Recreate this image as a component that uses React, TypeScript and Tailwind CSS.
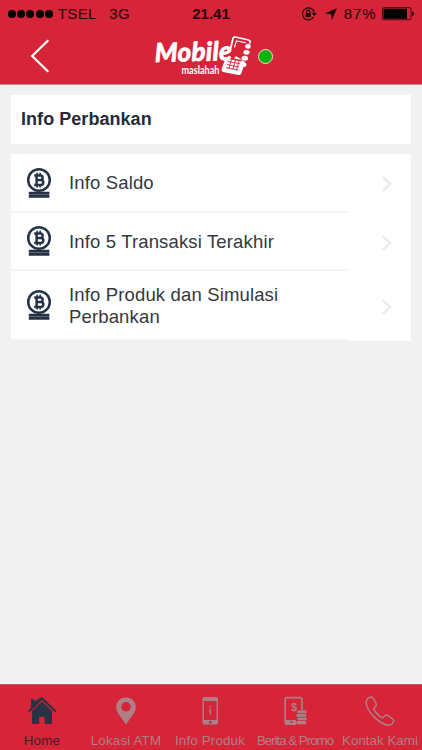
import type { ReactNode } from 'react';

interface MenuItem {
    id: string;
    label: string;
    rowClass: string;
}

interface TabItem {
    id: string;
    label: string;
    icon: ReactNode;
    width: string;
    textClass: string;
}

const menuItems: MenuItem[] = [
    { id: 'saldo', label: 'Info Saldo', rowClass: 'h-[59px]' },
    { id: 'transaksi', label: 'Info 5 Transaksi Terakhir', rowClass: 'h-[58px]' },
    { id: 'produk', label: 'Info Produk dan Simulasi Perbankan', rowClass: 'h-[70px]' },
];

function HomeIcon() {
    return (
        <svg width="30" height="30" viewBox="0 0 30 30" fill="currentColor" className="text-[#2a3344]">
            <path d="M4 8V3h3v2.500L15 1l14.500 14-1.400 1.400L15 4 2.200 16.400 1 15l3-3z" />
            <path d="M15 5.600 5 15v13h7.200v-7h5.400v7H25V15z" />
        </svg>
    );
}

function PinIcon() {
    return (
        <svg width="30" height="30" viewBox="0 0 30 30" fill="currentColor">
            <path
                fillRule="evenodd"
                d="M15 1.500C9.300 1.500 5.200 5.700 5.200 11c0 5.500 4 8.500 9.800 17.500C20.800 19.500 24.800 16.500 24.800 11 24.800 5.700 20.700 1.500 15 1.500zM15 6a4.800 4.800 0 1 1 0 9.600A4.800 4.800 0 0 1 15 6z"
            />
        </svg>
    );
}

function InfoPhoneIcon() {
    return (
        <svg width="30" height="30" viewBox="0 0 30 30" fill="currentColor">
            <path fillRule="evenodd" d="M9 1h12.500A1.500 1.500 0 0 1 23 2.500v24.500a1.500 1.500 0 0 1-1.500 1.500H9A1.500 1.500 0 0 1 7.500 27V2.500A1.500 1.500 0 0 1 9 1zM8.900 5v19h12.700V5z" />
            <circle cx="15.300" cy="26.300" r="1.200" fill="#7d3b47" />
            <rect x="14.500" y="10" width="1.600" height="1.600" />
            <rect x="14.500" y="12.500" width="1.600" height="6" />
        </svg>
    );
}

function PromoIcon() {
    return (
        <svg width="30" height="30" viewBox="0 0 30 30" fill="currentColor">
            <path d="M22 14V3.500A1.800 1.800 0 0 0 20.200 1.700H7A1.800 1.800 0 0 0 5.200 3.500v22.800A1.800 1.800 0 0 0 7 28.100h9" fill="none" stroke="currentColor" strokeWidth="1.700" />
            <path d="M5 24h11v4H5z" />
            <circle cx="11.500" cy="26" r="1.100" fill="#d62439" />
            <text x="13.700" y="14.500" textAnchor="middle" fontFamily="Liberation Sans" fontSize="10.500" fontWeight="700">$</text>
            <path d="M17.500 14.500h9v2.800h-9zM16.500 18h9.500v2.800h-9.500zM17.500 21.500h9v2.800h-9zM16.500 25h9.500v3.200h-9.500z" />
        </svg>
    );
}

function CallIcon() {
    return (
        <svg width="30" height="30" viewBox="0 0 30 30" fill="none" stroke="currentColor" strokeWidth="1.500" strokeLinejoin="round">
            <path d="M6.300 1.100C4 1.200 1.100 3.300 1.100 6.500c.5 5.500 4.500 11 8.500 14.900 4.500 4.300 9.500 7.600 14.300 7.800 2.500 0 4.600-2.500 4.900-4.500.1-1.400-5.500-5.300-7.300-5.600-1.900-.1-2.600 2.500-4 2.600-2.500-.5-8.200-6.200-8.700-8.700.1-1.700 2.700-2.100 2.600-4.100C11.200 7 8 1.100 6.300 1.100z" />
        </svg>
    );
}

const tabs: TabItem[] = [
    { id: 'home', label: 'Home', icon: <HomeIcon />, width: 'w-[84px]', textClass: 'text-[#4a1b2c] tracking-[0.2px]' },
    { id: 'atm', label: 'Lokasi ATM', icon: <PinIcon />, width: 'w-[84px]', textClass: 'text-[#ad8087] tracking-[0.15px]' },
    { id: 'produk', label: 'Info Produk', icon: <InfoPhoneIcon />, width: 'w-[84px]', textClass: 'text-[#ad8087] tracking-[0.15px]' },
    { id: 'berita', label: 'Berita & Promo', icon: <PromoIcon />, width: 'w-[86px]', textClass: 'text-[#ad8087] tracking-[-1.05px]' },
    { id: 'kontak', label: 'Kontak Kami', icon: <CallIcon />, width: 'w-[84px]', textClass: 'text-[#ad8087]' },
];

function CoinIcon() {
    return (
        <svg width="26" height="32" viewBox="0 0 26 32" className="shrink-0 text-[#263346]" fill="currentColor">
            <circle cx="13" cy="13" r="10.800" fill="none" stroke="currentColor" strokeWidth="2.500" />
            {/* bitcoin mark */}
            <path
                d="M8.200 8.500h6.200a2.200 2.200 0 0 1 0 4.500h-3.600 4a2.400 2.400 0 0 1 0 4.900H8.200M10.600 8.500v9.400"
                fill="none"
                stroke="currentColor"
                strokeWidth="2.500"
            />
            <path d="M10.300 5.800h1.700v2.500h-1.700zM13.300 5.800H15v2.500h-1.700zM10.300 18H12v2.600h-1.700zM13.300 18H15v2.600h-1.700z" />
            <path d="M2.800 24.800h20.600v2.900H2.800zM2.800 28h20.600v2.800H2.800z" />
        </svg>
    );
}

function Logo() {
    return (
        <svg width="100" height="44" viewBox="0 0 100 44" className="shrink-0" fill="#fff">
            <text x="4" y="28" transform="rotate(-1.500 4 28)" fontFamily="Lato" fontSize="26" fontWeight="700" fontStyle="italic" stroke="#fff" strokeWidth=".9" strokeLinejoin="round" textLength="77" lengthAdjust="spacing">Mobile</text>
            <text x="30.500" y="40" fontFamily="Lato" fontSize="10.500" fontWeight="700" textLength="38" lengthAdjust="spacingAndGlyphs">maslahah</text>
            {/* handset */}
            <path d="M79.500 15 82 4.500Q82.500 2.500 84.500 3L97.500 6q2 .5 1.500 2.800" fill="none" stroke="#fff" strokeWidth="1.700" strokeLinecap="round" />
            <path d="M83.500 13 85.500 7l9 1.800" fill="none" stroke="#fff" strokeWidth="1.100" strokeLinecap="round" />
            <path d="M83 24.500 91 26l-3 10.500-14-2.500 2.500-8-2-1.500L70.500 35q-.5 2.500 1.500 3L87.500 41q2 .2 2.800-1.500L94 28l-9-6z" />
            <path d="M77 25 91 27.500 88 37 73.500 34z" />
            <path d="m77 27.500 12 2.300M76 30.500l12 2.500M75.200 33.500l12 2.500M80.500 25.500l-2.700 9.500M84.500 26l-2.700 9.800M88 27l-2.700 9.600" stroke="#d62439" strokeWidth=".9" />
            <ellipse cx="97" cy="12.300" rx="2.700" ry="2.500" />
            <ellipse cx="95.500" cy="18.300" rx="3.100" ry="2.400" />
            <ellipse cx="93.800" cy="24.300" rx="3.300" ry="2.500" />
            <ellipse cx="92" cy="30.500" rx="3.400" ry="2.600" />
        </svg>
    );
}

function StatusBar() {
    return (
        <div className="flex h-7 items-center pl-2 text-[15px] text-[#240408]">
            <div className="flex gap-[1.200px]">
                {[0, 1, 2, 3, 4].map((dot) => (
                    <span key={dot} className="size-[8px] rounded-full bg-black" />
                ))}
            </div>
            <span className="ml-[5px] w-[51.500px] tracking-[0.400px]">TSEL</span>
            <span className="w-[83px] tracking-[0.300px]">3G</span>
            <span className="w-[108.500px] font-bold">21.41</span>
            <svg width="16" height="16" viewBox="0 0 16 16" fill="none" stroke="currentColor" strokeWidth="1.200">
                <path d="M12.600 11A6 6 0 1 1 13.300 6.500" />
                <path d="M10.700 7h5.200L13.300 10z" fill="currentColor" stroke="none" />
                <rect x="4.700" y="7" width="5.200" height="4" fill="currentColor" stroke="none" />
                <path d="M5.700 7V5.700a1.600 1.600 0 0 1 3.200 0V7" />
            </svg>
            <svg width="12" height="12" viewBox="0 0 12 12" className="ml-2" fill="currentColor">
                <path d="M12 0 7 12 6 6.300 0 5.500z" />
            </svg>
            <span className="ml-[7px] w-[38px] tracking-[0.900px]">87%</span>
            <svg width="33" height="14" viewBox="0 0 33 14" className="shrink-0">
                <rect x=".5" y=".7" width="28.500" height="12" rx="1" fill="none" stroke="#4b0a12" />
                <rect x="1.500" y="1.700" width="23.500" height="10" fill="#000" />
                <path d="M30 4.500q2 .5 2 2.200t-2 2.200z" fill="#240408" />
            </svg>
        </div>
    );
}

export default function App() {
    return (
        <div className="flex h-[750px] w-[422px] flex-col overflow-hidden bg-[#f1f1f1] font-['Liberation_Sans',Arial,sans-serif]">
            <header className="h-[85px] shrink-0 border-b border-[#c88d94] bg-[#d62439]">
                <StatusBar />
                <div className="flex h-[56px] items-center">
                    <svg width="20" height="36" viewBox="0 0 20 36" className="ml-[30px]" fill="none" stroke="#fff" strokeWidth="2.200">
                        <path d="M18.300 2.200 2.200 18l16.100 15.800" />
                    </svg>
                    <div className="ml-[101px]">
                        <Logo />
                    </div>
                    <span className="ml-[7px] size-[15px] rounded-full border border-[#f5dccb] bg-[#0db30d]" />
                </div>
            </header>

            <main className="flex grow flex-col gap-2.5 px-[11px] pt-2.5">
                <h1 className="flex h-[49px] items-center bg-white pl-2.5 text-[18px] font-bold tracking-[0.050px] text-[#252b38]">
                    Info Perbankan
                </h1>
                <ul className="bg-white">
                    {menuItems.map((item) => (
                        <li key={item.id} className={`flex items-stretch ${item.rowClass}`}>
                            <div className="flex w-[338px] items-center border-b-2 border-[#f4f4f4] pl-[15px]">
                                <CoinIcon />
                                <span className="ml-[17px] w-[240px] pt-px text-[18.500px] leading-[22px] tracking-[0.150px] text-[#343840]">
                                    {item.label}
                                </span>
                            </div>
                            <div className="flex grow items-center pt-px pl-[32px]">
                                <svg width="12" height="18" viewBox="0 0 12 18" fill="none" stroke="#ececec" strokeWidth="2.400">
                                    <path d="m1.500 2 7.700 7-7.700 7" />
                                </svg>
                            </div>
                        </li>
                    ))}
                </ul>
            </main>

            <nav className="flex h-[66px] shrink-0 border-t border-[#b8636e] bg-[#d62439]">
                {tabs.map((tab) => (
                    <div key={tab.id} className={`flex shrink-0 flex-col items-center pt-[11px] text-[13.400px] leading-4 whitespace-nowrap ${tab.width} ${tab.textClass}`}>
                        {tab.icon}
                        <span className="mt-[7px]">{tab.label}</span>
                    </div>
                ))}
            </nav>
        </div>
    );
}
